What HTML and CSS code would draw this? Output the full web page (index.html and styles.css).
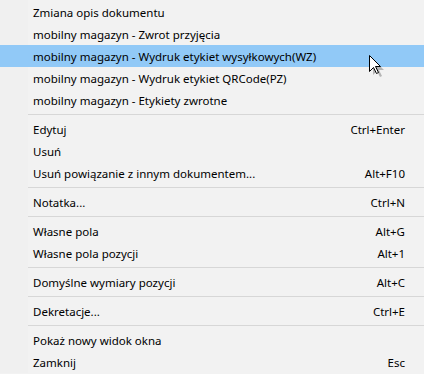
FILE: index.html
```html
<!DOCTYPE html>
<html lang="pl">
<head>
    <meta charset="UTF-8">
    <title>Menu kontekstowe</title>
    <link rel="stylesheet" href="styles.css">
</head>
<body>
    <ul class="menu">
        <li class="item"><span>Zmiana opis dokumentu</span></li>
        <li class="item"><span>mobilny magazyn - Zwrot przyjęcia</span></li>
        <li class="item active"><span>mobilny magazyn - Wydruk etykiet wysyłkowych(WZ)</span></li>
        <li class="item"><span>mobilny magazyn - Wydruk etykiet QRCode(PZ)</span></li>
        <li class="item"><span>mobilny magazyn - Etykiety zwrotne</span></li>
        <li class="sep"></li>
        <li class="item"><span>Edytuj</span><span class="key">Ctrl+Enter</span></li>
        <li class="item"><span>Usuń</span></li>
        <li class="item"><span>Usuń powiązanie z innym dokumentem...</span><span class="key">Alt+F10</span></li>
        <li class="sep"></li>
        <li class="item"><span>Notatka...</span><span class="key">Ctrl+N</span></li>
        <li class="sep"></li>
        <li class="item"><span>Własne pola</span><span class="key">Alt+G</span></li>
        <li class="item"><span>Własne pola pozycji</span><span class="key">Alt+1</span></li>
        <li class="sep"></li>
        <li class="item"><span>Domyślne wymiary pozycji</span><span class="key">Alt+C</span></li>
        <li class="sep"></li>
        <li class="item"><span>Dekretacje...</span><span class="key">Ctrl+E</span></li>
        <li class="sep"></li>
        <li class="item"><span>Pokaż nowy widok okna</span></li>
        <li class="item"><span>Zamknij</span><span class="key">Esc</span></li>
    </ul>

    <!-- mouse pointer over the highlighted item -->
    <svg class="cursor" width="16" height="22" viewBox="0 0 16 22">
        <path d="M2.5 2.5 L2.5 18.5 L6.5 14.5 L9.5 20.5 L11.5 19.5 L8.5 13.5 L13.5 13.5 Z" fill="#000" opacity="0.25" transform="translate(1.5 1.5)"/>
        <path d="M0.5 0.5 L0.5 16.5 L4.5 12.5 L7.5 18.5 L9.5 17.5 L6.5 11.5 L11.5 11.5 Z" fill="#fff" stroke="#000" stroke-width="1"/>
    </svg>
</body>
</html>
```

FILE: styles.css
```css
/* Windows-like context menu */
body {
    margin: 0;
    background-color: #f2f2f2;
    font-family: "Noto Sans", "Open Sans", sans-serif;
    font-size: 11.5px;
    color: #000;
}

.menu {
    list-style: none;
    margin: 0;
    padding: 1px 0 0 0;
    background: linear-gradient(to right, #f0f0f0 28px, #f2f2f2 28px); /* icon gutter */
}

.item {
    display: flex;
    justify-content: space-between;
    align-items: center;
    height: 22px;
    padding: 0 19px 0 33px;
    white-space: nowrap;
}

.item.active {
    background-color: #91c9f7;   /* hover highlight */
}

.sep {
    height: 7px;
    margin-left: 28px;
    position: relative;
}

.sep::after {
    content: "";
    display: block;
    position: absolute;
    left: 0;
    right: 0;
    top: 3px;
    height: 1px;
    background-color: #d7d7d7;
}

.cursor {
    position: absolute;
    left: 369px;
    top: 55px;
}
```
